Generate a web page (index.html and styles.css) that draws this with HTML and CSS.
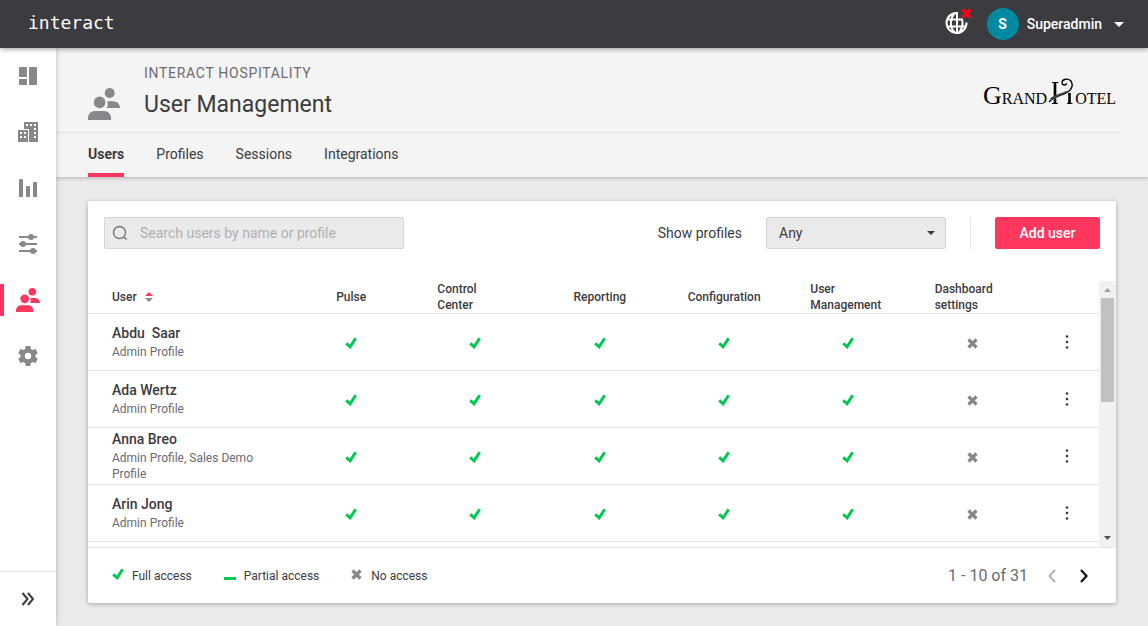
FILE: index.html
```html
<!DOCTYPE html>
<html lang="en">
<head>
<meta charset="utf-8">
<meta name="viewport" content="width=device-width, initial-scale=1">
<title>User Management</title>
<link rel="stylesheet" href="styles.css">
</head>
<body class="app">
<svg class="sprite" aria-hidden="true">
  <symbol id="people" viewBox="0 0 32 32"><circle cx="21.7" cy="5" r="5"/><circle cx="11.6" cy="14.4" r="5.8"/><path d="M0 32v-2c0-4 3-7 7-7h9c4 0 7 3 7 7v2z"/><path d="M18.800 20c1-2 1.200-4.500.4-6.800H25c4 0 7 2.800 7 6.800z"/></symbol>
  <symbol id="check" viewBox="0 0 12 12"><path d="M1.200 6.300l3.900 3.500 5.600-8.600" fill="none" stroke="currentColor" stroke-width="3"/></symbol>
  <symbol id="cross" viewBox="0 0 12 12"><path d="M1.500 2.500l8 8M9.500 2.500l-8 8" fill="none" stroke="currentColor" stroke-width="3.200"/></symbol>
  <symbol id="dots" viewBox="0 0 4 16"><circle cx="2" cy="2.500" r="1.300"/><circle cx="2" cy="8" r="1.300"/><circle cx="2" cy="13.500" r="1.300"/></symbol>
</svg>

<header class="topbar">
  <a class="brand" href="#">interact</a>
  <div class="account">
    <button class="globe" aria-label="Connection status">
      <svg width="28" height="28" viewBox="0 0 28 28" fill="none" stroke="#fff" stroke-width="2"><path d="M15 5.100a10 10 0 1 0 8.500 9.400M12 5.200c-5.500 5-5.500 14.600 0 19.600M14 5v20M15.500 24.800c3.500-3 4.500-7 3.900-12.300M4.500 11.500H20M4.500 18.500H23"/><path d="M19.500 1.500l8 8M27.500 1.500l-8 8" stroke="#ff0018" stroke-width="3.200"/></svg>
    </button>
    <button class="user-menu">
      <span class="avatar">S</span>
      <span>Superadmin</span>
      <svg width="10" height="5" viewBox="0 0 10 5" fill="#fff"><path d="M0 0h10L5 5z"/></svg>
    </button>
  </div>
</header>

<div class="shell">
  <nav class="sidebar" aria-label="Main">
    <a class="side-link" href="#" aria-label="Dashboard"><svg width="24" height="24" viewBox="0 0 24 24"><path d="M4 3h6a1 1 0 0 1 1 1v9H3V4a1 1 0 0 1 1-1zM3 15h8v6H4a1 1 0 0 1-1-1zM13 4a1 1 0 0 1 1-1h6a1 1 0 0 1 1 1v16a1 1 0 0 1-1 1h-6a1 1 0 0 1-1-1z"/></svg></a>
    <a class="side-link" href="#" aria-label="Properties"><svg width="24" height="24" viewBox="0 0 24 24" fill-rule="evenodd"><path d="M8 2h14v20H13V9H8zM10 4v2h2V4zM14 4v2h2V4zM18 4v2h2V4zM18 8v2h2V8zM18 12v2h2v-2zM18 16v2h2v-2zM2 10h10v12H2zM4 12v2h2v-2zM8 12v2h2v-2zM4 16v2h2v-2zM8 16v2h2v-2z"/></svg></a>
    <a class="side-link" href="#" aria-label="Reports"><svg width="24" height="24" viewBox="0 0 24 24"><path d="M3 4a1 1 0 0 1 1-1h2a1 1 0 0 1 1 1v17H3zM10 11a1 1 0 0 1 1-1h2a1 1 0 0 1 1 1v10h-4zM17 7a1 1 0 0 1 1-1h2a1 1 0 0 1 1 1v14h-4z"/></svg></a>
    <a class="side-link" href="#" aria-label="Controls"><svg width="24" height="24" viewBox="0 0 24 24"><path d="M3 4h18v2H3zM3 11h18v2H3zM3 18h18v2H3z"/><circle cx="15" cy="5" r="3"/><circle cx="7" cy="12" r="3"/><circle cx="17" cy="19" r="3"/></svg></a>
    <a class="side-link active" href="#" aria-label="Users"><svg width="24" height="24"><use href="#people"/></svg></a>
    <a class="side-link" href="#" aria-label="Settings"><svg width="24" height="24" viewBox="0 0 24 24"><path d="M19.430 12.980c.04-.32.07-.64.07-.98s-.03-.66-.07-.98l2.110-1.650c.19-.15.24-.42.12-.64l-2-3.460c-.12-.22-.39-.3-.61-.22l-2.490 1c-.52-.4-1.080-.73-1.690-.98l-.38-2.650C14.460 2.180 14.250 2 14 2h-4c-.25 0-.46.18-.49.42l-.38 2.650c-.61.25-1.170.59-1.690.98l-2.490-1c-.23-.09-.49 0-.61.22l-2 3.460c-.13.22-.07.49.12.64l2.110 1.650c-.04.32-.07.65-.07.98s.03.66.07.98l-2.110 1.650c-.19.15-.24.42-.12.64l2 3.460c.12.22.39.3.61.22l2.490-1c.52.4 1.080.73 1.690.98l.38 2.650c.03.24.24.42.49.42h4c.25 0 .46-.18.49-.42l.38-2.650c.61-.25 1.170-.59 1.690-.98l2.490 1c.23.09.49 0 .61-.22l2-3.460c.12-.22.07-.49-.12-.64zM12 15.200a3.200 3.200 0 1 1 0-6.400 3.200 3.200 0 0 1 0 6.400z"/></svg></a>
    <button class="expand" aria-label="Expand menu"><svg width="14" height="14" viewBox="0 0 14 14" fill="none" stroke="currentColor" stroke-width="2"><path d="M1.500 1l5 6-5 6M7 1l5 6-5 6"/></svg></button>
  </nav>

  <main class="main">
    <div class="page-head">
      <div class="title-row">
        <svg class="title-icon" width="32" height="32"><use href="#people"/></svg>
        <div class="titles">
          <p class="overline">INTERACT HOSPITALITY</p>
          <h1 class="title">User Management</h1>
        </div>
        <div class="hotel" role="img" aria-label="Grand Hotel"><span class="hotel-cap">G</span><span>RAND</span><svg width="28" height="26" viewBox="0 0 28 26" fill="none" stroke="#000"><path d="M8 4.500V18.500M8 20.500v5M22.500 15v10.500" stroke-width="2.600"/><path d="M5 4.500h6.500M5 25.400h6M20 25.400h5.500"/><path d="M2 24c5-6 12-6 18-9.500 5.500-3 6.500-8.500 3.500-12-3-2.500-8-1.500-8.500 2-.2 3 4 3.500 4.700.8" stroke-width="1.400"/><path d="M3.500 21.500C9 16.500 15 17 20 13.500" stroke-width="2" stroke="#444"/></svg><span>OTEL</span></div>
      </div>
      <nav class="tabs" aria-label="Sections">
        <a class="tab current" href="#">Users</a>
        <a class="tab" href="#">Profiles</a>
        <a class="tab" href="#">Sessions</a>
        <a class="tab" href="#">Integrations</a>
      </nav>
    </div>

    <section class="card">
      <div class="toolbar">
        <label class="search">
          <svg width="16" height="16" viewBox="0 0 16 16" fill="none" stroke="#77777a" stroke-width="1.400"><circle cx="7.500" cy="7.500" r="6"/><path d="M12 12l2.500 2.500"/></svg>
          <input class="search-input" type="text" aria-label="Search users" placeholder="Search users by name or profile">
        </label>
        <label class="filter-label" for="profiles">Show profiles</label>
        <div class="select-wrap">
          <select class="select" id="profiles"><option>Any</option></select>
          <svg class="select-arrow" width="8" height="4" viewBox="0 0 8 4"><path d="M0 0h8L4 4z"/></svg>
        </div>
        <div class="add"><button class="add-button">Add user</button></div>
      </div>

      <div class="list">
        <div class="list-body">
          <table class="table">
            <thead>
              <tr>
                <th class="col-user"><span class="sort">User <svg width="8" height="10" viewBox="0 0 8 10"><path d="M0 4l4-4 4 4z" fill="#ff375f"/><path d="M0 6h8l-4 4z" fill="#88888a"/></svg></span></th>
                <th><div class="head">Pulse</div></th>
                <th><div class="head">Control Center</div></th>
                <th><div class="head">Reporting</div></th>
                <th><div class="head">Configuration</div></th>
                <th><div class="head">User Management</div></th>
                <th><div class="head">Dashboard settings</div></th>
                <th class="col-menu"></th>
              </tr>
            </thead>
            <tbody id="rows"></tbody>
          </table>
        </div>
        <div class="scrollbar" aria-hidden="true">
          <svg width="7" height="4" viewBox="0 0 7 4" fill="#a3a3a3"><path d="M0 4h7L3.500 0z"/></svg>
          <div class="track"><div class="thumb"></div></div>
          <svg width="7" height="4" viewBox="0 0 7 4" fill="#505050"><path d="M0 0h7L3.500 4z"/></svg>
        </div>
      </div>

      <footer class="footer">
        <ul class="legend">
          <li><svg class="legend-mark yes" width="12" height="12"><use href="#check"/></svg>Full access</li>
          <li><span class="partial"></span>Partial access</li>
          <li><svg class="legend-mark no" width="12" height="12"><use href="#cross"/></svg>No access</li>
        </ul>
        <div class="pager">
          <span>1 - 10 of 31</span>
          <button class="page-button" aria-label="Previous page" disabled><svg width="8" height="14" viewBox="0 0 8 14" fill="none" stroke="currentColor" stroke-width="2"><path d="M7 1L1.500 7 7 13"/></svg></button>
          <button class="page-button" aria-label="Next page"><svg width="8" height="14" viewBox="0 0 8 14" fill="none" stroke="currentColor" stroke-width="2.200"><path d="M1 1l5.500 6L1 13"/></svg></button>
        </div>
      </footer>
    </section>
  </main>
</div>
<script src="users.js"></script>
</body>
</html>
```
FILE: users.js
```js
const users = [
  ["Abdu  Saar", "Admin Profile"],
  ["Ada Wertz", "Admin Profile"],
  ["Anna Breo", "Admin Profile, Sales Demo Profile"],
  ["Arin Jong", "Admin Profile"]
];
const yes = '<td><svg class="mark yes" width="12" height="12" role="img" aria-label="Full access"><use href="#check"/></svg></td>';
const no = '<td><svg class="mark no" width="12" height="12" role="img" aria-label="No access"><use href="#cross"/></svg></td>';
document.getElementById("rows").innerHTML = users.map(([name, profile]) =>
  `<tr><td class="col-user"><div class="name">${name}</div><div class="profile">${profile}</div></td>${yes.repeat(5)}${no}<td class="col-menu"><button class="more" aria-label="Actions for ${name}"><svg width="4" height="16"><use href="#dots"/></svg></button></td></tr>`
).join("");
```
FILE: styles.css
```css
* { box-sizing: border-box; }

.app {
  margin: 0;
  min-height: 100vh;
  display: flex;
  flex-direction: column;
  background: #eaeaea;
  color: #3c3b40;
  font: 14px/20px Roboto, "Liberation Sans", sans-serif;
}

.sprite { display: none; }
svg { display: block; flex: none; }
button {
  padding: 0;
  border: 0;
  background: none;
  color: inherit;
  font: inherit;
}
a { color: inherit; text-decoration: none; }

.topbar {
  position: relative;
  z-index: 3;
  display: flex;
  align-items: center;
  justify-content: space-between;
  height: 48px;
  padding: 0 24px 0 28px;
  background: #3c3b40;
  color: #fff;
  box-shadow: 0 1px 5px rgba(0, 0, 0, .4);
}
.brand { padding-bottom: 2px; font: 18px/24px "DejaVu Sans Mono", monospace; }
.account { display: flex; align-items: center; gap: 16px; }
.globe { padding-bottom: 4px; }
.user-menu { display: flex; align-items: center; gap: 8px; font-weight: 500; }
.user-menu svg { margin-left: 4px; }
.avatar {
  width: 32px;
  height: 32px;
  border-radius: 50%;
  background: #008aa1;
  font-weight: 700;
  line-height: 32px;
}

.shell { flex: 1; display: flex; }

.sidebar {
  position: relative;
  z-index: 2;
  display: flex;
  flex-direction: column;
  width: 56px;
  background: #fff;
  color: #88888a;
  box-shadow: 0 0 5px rgba(0, 0, 0, .25);
}
.side-link {
  display: grid;
  place-items: center;
  height: 32px;
  margin: 12px 0;
  border: solid transparent;
  border-width: 0 4px;
}
.side-link svg, .title-icon { fill: currentColor; }
.active { color: #ff375f; border-left-color: #ff375f; }
.expand {
  display: grid;
  place-items: center;
  height: 55px;
  margin-top: auto;
  border-top: 1px solid #e6e6e6;
  color: #3c3b40;
}

.main { flex: 1; min-width: 0; display: flex; flex-direction: column; }

.page-head {
  background: #f4f4f4;
  box-shadow: 0 1px 4px rgba(0, 0, 0, .25);
}
.title-row {
  display: flex;
  align-items: center;
  height: 85px;
  margin-right: 28px;
  padding: 2px 4px 0 32px;
  border-bottom: 1px solid #e6e6e6;
}
.title-icon { margin: 26px 24px 0 0; color: #88888a; }
.titles { flex: 1; padding-top: 2px; }
.overline {
  margin: 0;
  color: #6b6b70;
  letter-spacing: .05em;
}
.title { margin: 6px 0 0; font-size: 23px; font-weight: 400; line-height: 32px; }
.hotel {
  display: flex;
  align-items: baseline;
  padding-top: 8px;
  color: #000;
  font: 16px/28px "Liberation Serif", serif;
}
.hotel-cap { font-size: 26px; }
.tabs { display: flex; gap: 32px; padding-left: 32px; }
.tab { padding: 11px 0 9px; border-bottom: 4px solid transparent; }
.current { border-color: #ff375f; font-weight: 700; }

.card {
  flex: 1;
  display: flex;
  flex-direction: column;
  margin: 24px 32px 23px;
  border-radius: 2px;
  background: #fff;
  box-shadow: 0 1px 4px rgba(0, 0, 0, .3);
}
.toolbar {
  display: flex;
  align-items: center;
  padding: 16px 16px 32px;
}
.search {
  display: flex;
  align-items: center;
  width: 300px;
  height: 32px;
  margin-right: auto;
  padding-left: 7px;
  gap: 12px;
  border: 1px solid #d6d6d6;
  border-radius: 2px;
  background: #eaeaea;
}
.search-input {
  flex: 1;
  min-width: 0;
  padding: 0;
  border: 0;
  background: none;
  font: inherit;
}
.search-input::placeholder { color: #b0b0b2; }
.select-wrap { position: relative; width: 180px; margin: 0 24px; }
.select {
  width: 100%;
  height: 32px;
  padding: 0 12px;
  appearance: none;
  border: 1px solid #d6d6d6;
  border-radius: 2px;
  background: #eaeaea;
  color: inherit;
  font: inherit;
}
.select-arrow {
  position: absolute;
  top: 14px;
  right: 11px;
  fill: #3c3b40;
  pointer-events: none;
}
.add { padding-left: 24px; border-left: 1px solid #e6e6e6; }
.add-button {
  display: block;
  min-width: 105px;
  height: 32px;
  padding: 0 24px;
  border-radius: 2px;
  background: #ff375f;
  color: #fff;
  font-weight: 500;
}

.list { flex: 1; display: flex; }
.list-body { flex: 1; min-width: 0; overflow: hidden; }
.table { width: 100%; table-layout: fixed; border-collapse: separate; border-spacing: 0; }
.table th, .table td { padding: 0; border-bottom: 1px solid #e6e6e6; }
.table th { height: 33px; font-size: 12px; font-weight: 500; line-height: 16px; }
.table td { height: 57px; }
.table .col-user { width: 201px; padding: 0 24px; text-align: left; }
.table .col-menu { width: 64px; }
.head { display: flex; justify-content: center; padding: 0 24px; text-align: left; }
.sort { display: flex; align-items: center; gap: 8px; }
.name { margin-bottom: 2px; font-weight: 500; line-height: 18px; white-space: pre; }
.profile { color: #6b6b70; font-size: 12px; line-height: 16px; }
.mark { margin: 2px auto 0; }
.more { display: block; margin: 0 auto; padding: 0 8px; fill: #3c3b40; }
.yes { color: #00c853; }
.no { color: #88888a; }

.scrollbar {
  display: flex;
  flex-direction: column;
  align-items: center;
  width: 17px;
  padding: 7px 0;
  gap: 6px;
  background: #f1f1f1;
}
.track { flex: 1; width: 13px; }
.thumb { height: 104px; background: #c1c1c1; }

.footer {
  display: flex;
  align-items: center;
  justify-content: space-between;
  height: 56px;
  padding: 0 20px 0 24px;
  border-top: 1px solid #e6e6e6;
}
.legend {
  display: flex;
  gap: 32px;
  margin: 0;
  padding: 0;
  list-style: none;
  font-size: 12px;
}
.legend li { display: flex; align-items: center; gap: 8px; }
.legend-mark { margin-bottom: 3px; }
.partial { width: 12px; height: 3px; margin-top: 5px; background: #00c853; }
.pager { display: flex; align-items: center; gap: 8px; color: #6b6b70; font-size: 16px; }
.page-button { display: grid; place-items: center; width: 24px; color: #111; }
.page-button:disabled { color: #b0b0b2; }
.pager span { margin-right: 4px; }
```
